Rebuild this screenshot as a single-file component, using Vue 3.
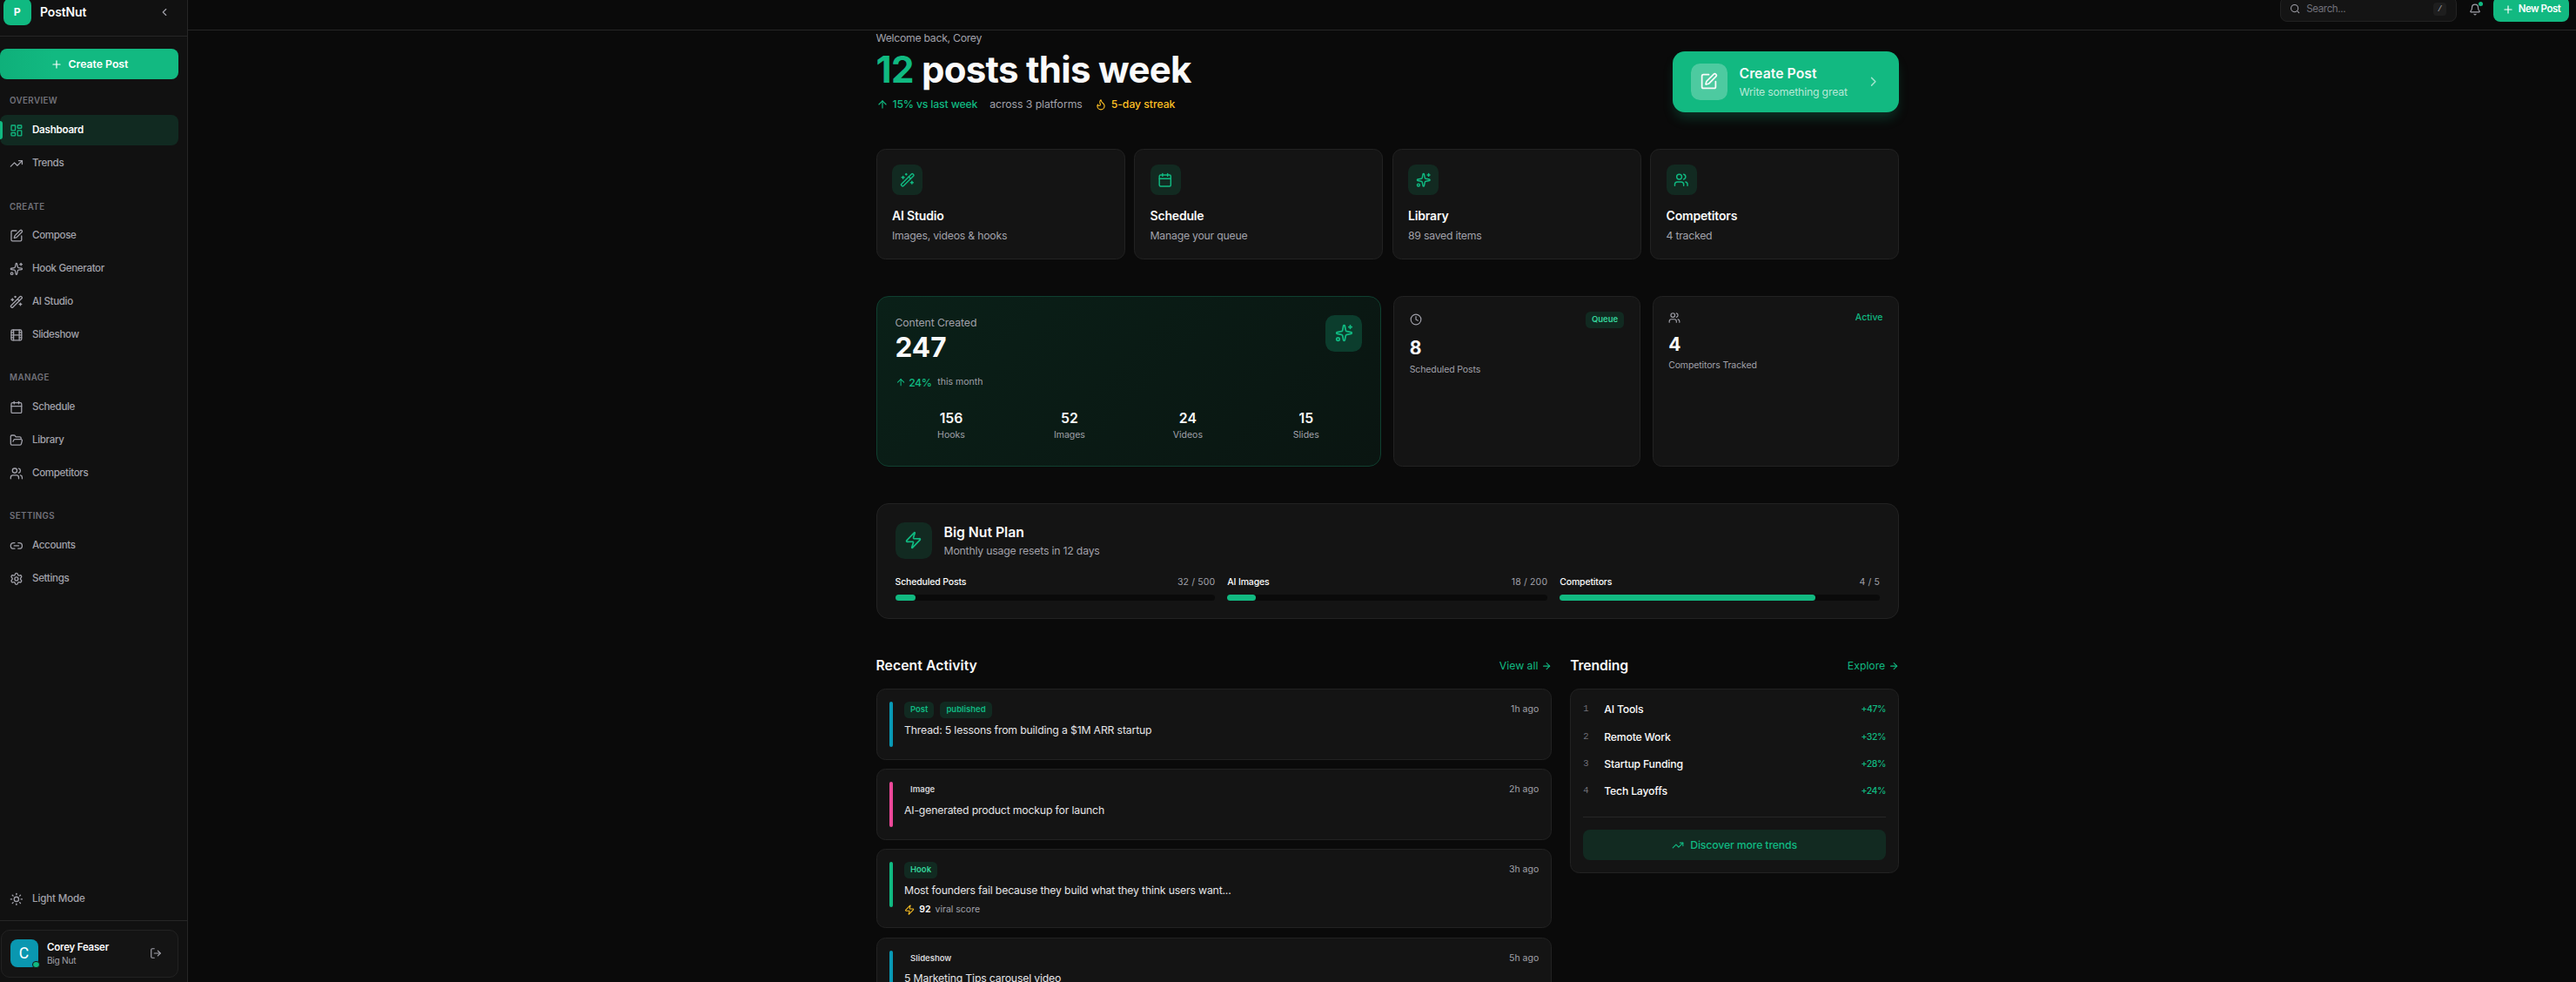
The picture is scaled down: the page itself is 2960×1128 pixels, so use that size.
<template>
    <div class="app">
        <aside class="sidebar">
            <div class="brand">
                <div class="logo">P</div>
                <span class="brand-name">PostNut</span>
                <svg class="icon s-14 collapse" viewBox="0 0 24 24" v-html="icons.chevronLeft"></svg>
            </div>
            <button class="create">
                <svg class="icon s-14" viewBox="0 0 24 24" v-html="icons.plus"></svg>
                <span>Create Post</span>
            </button>
            <nav class="nav">
                <div v-for="section in sections" :key="section.title" class="section">
                    <div class="section-title">{{ section.title }}</div>
                    <a v-for="item in section.items" :key="item.label" class="nav-item" :class="{active: item.label === current}">
                        <svg class="icon s-16" viewBox="0 0 24 24" v-html="icons[item.icon]"></svg>
                        <span>{{ item.label }}</span>
                    </a>
                </div>
            </nav>
            <a class="nav-item theme">
                <svg class="icon s-16" viewBox="0 0 24 24" v-html="icons.sun"></svg>
                <span>Light Mode</span>
            </a>
            <div class="user-wrap">
                <div class="user">
                    <div class="avatar">C<i class="online"></i></div>
                    <div class="user-text">
                        <span class="user-name">Corey Feaser</span>
                        <span class="user-plan">Big Nut</span>
                    </div>
                    <svg class="icon s-14" viewBox="0 0 24 24" v-html="icons.logout"></svg>
                </div>
            </div>
        </aside>

        <div class="page">
            <header class="topbar">
                <div class="search">
                    <svg class="icon s-12" viewBox="0 0 24 24" v-html="icons.search"></svg>
                    <span class="placeholder">Search...</span>
                    <kbd>/</kbd>
                </div>
                <div class="bell">
                    <svg class="icon s-14" viewBox="0 0 24 24" v-html="icons.bell"></svg>
                    <i class="bell-dot"></i>
                </div>
                <button class="new-post">
                    <svg class="icon s-14" viewBox="0 0 24 24" v-html="icons.plus"></svg>
                    <span>New Post</span>
                </button>
            </header>

            <main class="content">
                <section class="hero">
                    <div>
                        <div class="welcome">Welcome back, Corey</div>
                        <h1><span class="count">12</span> posts this week</h1>
                        <div class="hero-meta">
                            <span class="meta up">
                                <svg class="icon s-14" viewBox="0 0 24 24" v-html="icons.arrowUp"></svg>
                                <span>15% vs last week</span>
                            </span>
                            <span class="platforms">across 3 platforms</span>
                            <span class="meta streak">
                                <svg class="icon s-14" viewBox="0 0 24 24" v-html="icons.flame"></svg>
                                <span>5-day streak</span>
                            </span>
                        </div>
                    </div>
                    <div class="cta">
                        <div class="cta-icon">
                            <svg class="icon s-21" viewBox="0 0 24 24" v-html="icons.pen"></svg>
                        </div>
                        <div class="cta-text">
                            <span class="cta-title">Create Post</span>
                            <span class="cta-sub">Write something great</span>
                        </div>
                        <svg class="icon s-17 cta-arrow" viewBox="0 0 24 24" v-html="icons.chevronRight"></svg>
                    </div>
                </section>

                <section class="actions">
                    <div v-for="action in actions" :key="action.title" class="card action">
                        <div class="tile">
                            <svg class="icon s-17" viewBox="0 0 24 24" v-html="icons[action.icon]"></svg>
                        </div>
                        <div class="action-title">{{ action.title }}</div>
                        <div class="action-sub">{{ action.sub }}</div>
                    </div>
                </section>

                <section class="stats">
                    <div class="card created">
                        <div class="created-head">
                            <div>
                                <div class="created-label">Content Created</div>
                                <div class="created-value">247</div>
                            </div>
                            <div class="tile large strong">
                                <svg class="icon s-21" viewBox="0 0 24 24" v-html="icons.sparkles"></svg>
                            </div>
                        </div>
                        <div class="created-delta">
                            <svg class="icon s-12" viewBox="0 0 24 24" v-html="icons.arrowUp"></svg>
                            <span class="delta">24%</span>
                            <span class="period">this month</span>
                        </div>
                        <div class="breakdown">
                            <div v-for="item in breakdown" :key="item.label" class="part">
                                <span class="part-value">{{ item.value }}</span>
                                <span class="part-label">{{ item.label }}</span>
                            </div>
                        </div>
                    </div>
                    <div class="card mini">
                        <div class="mini-head">
                            <svg class="icon s-14" viewBox="0 0 24 24" v-html="icons.clock"></svg>
                            <span class="badge mint">Queue</span>
                        </div>
                        <div class="mini-value">8</div>
                        <div class="mini-label">Scheduled Posts</div>
                    </div>
                    <div class="card mini">
                        <div class="mini-head">
                            <svg class="icon s-14" viewBox="0 0 24 24" v-html="icons.users"></svg>
                            <span class="live">Active</span>
                        </div>
                        <div class="mini-value">4</div>
                        <div class="mini-label">Competitors Tracked</div>
                    </div>
                </section>

                <section class="card plan">
                    <div class="plan-head">
                        <div class="tile large">
                            <svg class="icon s-21" viewBox="0 0 24 24" v-html="icons.zap"></svg>
                        </div>
                        <div>
                            <div class="plan-title">Big Nut Plan</div>
                            <div class="plan-sub">Monthly usage resets in 12 days</div>
                        </div>
                    </div>
                    <div class="usages">
                        <div v-for="usage in usages" :key="usage.label">
                            <div class="usage-row">
                                <span class="usage-label">{{ usage.label }}</span>
                                <span class="usage-count">{{ usage.used }} / {{ usage.total }}</span>
                            </div>
                            <div class="track">
                                <div class="fill" :style="{width: `${usage.used / usage.total * 100}%`}"></div>
                            </div>
                        </div>
                    </div>
                </section>

                <section class="bottom">
                    <div>
                        <div class="heading">
                            <h2>Recent Activity</h2>
                            <a class="more"><span>View all</span><svg class="icon s-12" viewBox="0 0 24 24" v-html="icons.arrowRight"></svg></a>
                        </div>
                        <div class="feed">
                            <div v-for="post in activity" :key="post.title" class="card entry">
                                <i class="stripe" :class="post.color"></i>
                                <div class="entry-body">
                                    <div class="badges">
                                        <span v-for="badge in post.badges" :key="badge.text" class="badge" :class="badge.tone">{{ badge.text }}</span>
                                        <span class="time">{{ post.time }}</span>
                                    </div>
                                    <div class="entry-title">{{ post.title }}</div>
                                    <div v-if="post.score" class="score">
                                        <svg class="icon s-12" viewBox="0 0 24 24" v-html="icons.zap"></svg>
                                        <b>{{ post.score }}</b>
                                        <span>viral score</span>
                                    </div>
                                </div>
                            </div>
                        </div>
                    </div>
                    <div>
                        <div class="heading">
                            <h2 class="tight">Trending</h2>
                            <a class="more"><span>Explore</span><svg class="icon s-12" viewBox="0 0 24 24" v-html="icons.arrowRight"></svg></a>
                        </div>
                        <div class="card trending">
                            <div v-for="(trend, index) in trends" :key="trend.name" class="trend">
                                <span class="rank">{{ index + 1 }}</span>
                                <span class="trend-name">{{ trend.name }}</span>
                                <span class="growth">+{{ trend.growth }}%</span>
                            </div>
                            <div class="discover-wrap">
                                <button class="discover">
                                    <svg class="icon s-14" viewBox="0 0 24 24" v-html="icons.trendingUp"></svg>
                                    <span>Discover more trends</span>
                                </button>
                            </div>
                        </div>
                    </div>
                </section>
            </main>
        </div>
    </div>
</template>

<script setup>
import {ref} from "vue"

const current = ref("Dashboard")

const icons = {
    chevronLeft: '<path d="m15 18-6-6 6-6"/>',
    chevronRight: '<path d="m9 18 6-6-6-6"/>',
    plus: '<path d="M5 12h14"/><path d="M12 5v14"/>',
    arrowUp: '<path d="m5 12 7-7 7 7"/><path d="M12 19V5"/>',
    arrowRight: '<path d="M5 12h14"/><path d="m12 5 7 7-7 7"/>',
    dashboard: '<rect width="7" height="9" x="3" y="3" rx="1"/><rect width="7" height="5" x="14" y="3" rx="1"/><rect width="7" height="9" x="14" y="12" rx="1"/><rect width="7" height="5" x="3" y="16" rx="1"/>',
    trendingUp: '<path d="M16 7h6v6"/><path d="m22 7-8.5 8.5-5-5L2 17"/>',
    pen: '<path d="M12 3H5a2 2 0 0 0-2 2v14a2 2 0 0 0 2 2h14a2 2 0 0 0 2-2v-7"/><path d="M18.375 2.625a1 1 0 0 1 3 3l-9.013 9.014a2 2 0 0 1-.853.505l-2.873.84a.5.5 0 0 1-.62-.62l.84-2.873a2 2 0 0 1 .506-.852z"/>',
    sparkles: '<path d="M11.017 2.814a1 1 0 0 1 1.966 0l1.051 5.558a2 2 0 0 0 1.594 1.594l5.558 1.051a1 1 0 0 1 0 1.966l-5.558 1.051a2 2 0 0 0-1.594 1.594l-1.051 5.558a1 1 0 0 1-1.966 0l-1.051-5.558a2 2 0 0 0-1.594-1.594l-5.558-1.051a1 1 0 0 1 0-1.966l5.558-1.051a2 2 0 0 0 1.594-1.594z"/><path d="M20 2v4"/><path d="M22 4h-4"/><circle cx="4" cy="20" r="2"/>',
    wand: '<path d="m21.64 3.64-1.28-1.28a1.21 1.21 0 0 0-1.72 0L2.36 18.64a1.21 1.21 0 0 0 0 1.72l1.28 1.28a1.2 1.2 0 0 0 1.72 0L21.64 5.36a1.2 1.2 0 0 0 0-1.72"/><path d="m14 7 3 3"/><path d="M5 6v4"/><path d="M19 14v4"/><path d="M10 2v2"/><path d="M7 8H3"/><path d="M21 16h-4"/><path d="M11 3H9"/>',
    film: '<rect width="18" height="18" x="3" y="3" rx="2"/><path d="M7 3v18"/><path d="M3 7.5h4"/><path d="M3 12h18"/><path d="M3 16.5h4"/><path d="M17 3v18"/><path d="M17 7.5h4"/><path d="M17 16.5h4"/>',
    calendar: '<path d="M8 2v4"/><path d="M16 2v4"/><rect width="18" height="18" x="3" y="4" rx="2"/><path d="M3 10h18"/>',
    folder: '<path d="m6 14 1.5-2.9A2 2 0 0 1 9.24 10H20a2 2 0 0 1 1.94 2.5l-1.54 6a2 2 0 0 1-1.95 1.5H4a2 2 0 0 1-2-2V5a2 2 0 0 1 2-2h3.9a2 2 0 0 1 1.69.9l.81 1.2a2 2 0 0 0 1.67.9H18a2 2 0 0 1 2 2v2"/>',
    users: '<path d="M16 21v-2a4 4 0 0 0-4-4H6a4 4 0 0 0-4 4v2"/><circle cx="9" cy="7" r="4"/><path d="M22 21v-2a4 4 0 0 0-3-3.87"/><path d="M16 3.128a4 4 0 0 1 0 7.744"/>',
    link: '<path d="M9 17H7A5 5 0 0 1 7 7h2"/><path d="M15 7h2a5 5 0 1 1 0 10h-2"/><path d="M8 12h8"/>',
    settings: '<path d="M9.671 4.136a2.34 2.34 0 0 1 4.659 0 2.34 2.34 0 0 0 3.319 1.915 2.34 2.34 0 0 1 2.33 4.033 2.34 2.34 0 0 0 0 3.831 2.34 2.34 0 0 1-2.33 4.033 2.34 2.34 0 0 0-3.319 1.915 2.34 2.34 0 0 1-4.659 0 2.34 2.34 0 0 0-3.32-1.915 2.34 2.34 0 0 1-2.33-4.033 2.34 2.34 0 0 0 0-3.831A2.34 2.34 0 0 1 6.35 6.051a2.34 2.34 0 0 0 3.319-1.915"/><circle cx="12" cy="12" r="3"/>',
    sun: '<circle cx="12" cy="12" r="4"/><path d="M12 2v2"/><path d="M12 20v2"/><path d="m4.93 4.93 1.41 1.41"/><path d="m17.66 17.66 1.41 1.41"/><path d="M2 12h2"/><path d="M20 12h2"/><path d="m6.34 17.66-1.41 1.41"/><path d="m19.07 4.93-1.41 1.41"/>',
    logout: '<path d="m16 17 5-5-5-5"/><path d="M21 12H9"/><path d="M9 21H5a2 2 0 0 1-2-2V5a2 2 0 0 1 2-2h4"/>',
    search: '<circle cx="11" cy="11" r="8"/><path d="m21 21-4.34-4.34"/>',
    bell: '<path d="M10.268 21a2 2 0 0 0 3.464 0"/><path d="M3.262 15.326A1 1 0 0 0 4 17h16a1 1 0 0 0 .74-1.673C19.41 13.956 18 12.499 18 8A6 6 0 0 0 6 8c0 4.499-1.411 5.956-2.738 7.326"/>',
    flame: '<path d="M8.5 14.5A2.5 2.5 0 0 0 11 12c0-1.38-.5-2-1-3-1.072-2.143-.224-4.054 2-6 .5 2.5 2 4.9 4 6.5 2 1.6 3 3.5 3 5.5a7 7 0 1 1-14 0c0-1.153.433-2.294 1-3a2.5 2.5 0 0 0 2.5 2.5z"/>',
    zap: '<path d="M4 14a1 1 0 0 1-.78-1.63l9.9-10.2a.5.5 0 0 1 .86.46l-1.92 6.02A1 1 0 0 0 13 10h7a1 1 0 0 1 .78 1.63l-9.9 10.2a.5.5 0 0 1-.86-.46l1.92-6.02A1 1 0 0 0 11 14z"/>',
    clock: '<circle cx="12" cy="12" r="10"/><path d="M12 6v6l4 2"/>'
}

const sections = [
    {title: "OVERVIEW", items: [
        {label: "Dashboard", icon: "dashboard"},
        {label: "Trends", icon: "trendingUp"}
    ]},
    {title: "CREATE", items: [
        {label: "Compose", icon: "pen"},
        {label: "Hook Generator", icon: "sparkles"},
        {label: "AI Studio", icon: "wand"},
        {label: "Slideshow", icon: "film"}
    ]},
    {title: "MANAGE", items: [
        {label: "Schedule", icon: "calendar"},
        {label: "Library", icon: "folder"},
        {label: "Competitors", icon: "users"}
    ]},
    {title: "SETTINGS", items: [
        {label: "Accounts", icon: "link"},
        {label: "Settings", icon: "settings"}
    ]}
]

const actions = [
    {title: "AI Studio", sub: "Images, videos & hooks", icon: "wand"},
    {title: "Schedule", sub: "Manage your queue", icon: "calendar"},
    {title: "Library", sub: "89 saved items", icon: "sparkles"},
    {title: "Competitors", sub: "4 tracked", icon: "users"}
]

const breakdown = [
    {value: 156, label: "Hooks"},
    {value: 52, label: "Images"},
    {value: 24, label: "Videos"},
    {value: 15, label: "Slides"}
]

const usages = [
    {label: "Scheduled Posts", used: 32, total: 500},
    {label: "AI Images", used: 18, total: 200},
    {label: "Competitors", used: 4, total: 5}
]

const activity = [
    {title: "Thread: 5 lessons from building a $1M ARR startup", time: "1h ago", color: "teal", badges: [{text: "Post", tone: "emerald"}, {text: "published", tone: "emerald"}]},
    {title: "AI-generated product mockup for launch", time: "2h ago", color: "pink", badges: [{text: "Image", tone: "plain"}]},
    {title: "Most founders fail because they build what they think users want...", time: "3h ago", color: "green", score: 92, badges: [{text: "Hook", tone: "mint"}]},
    {title: "5 Marketing Tips carousel video", time: "5h ago", color: "teal", badges: [{text: "Slideshow", tone: "plain"}]}
]

const trends = [
    {name: "AI Tools", growth: 47},
    {name: "Remote Work", growth: 32},
    {name: "Startup Funding", growth: 28},
    {name: "Tech Layoffs", growth: 24}
]
</script>

<style>
body {
    background: #0a0a0a;
}
</style>

<style scoped>
.app {
    display: flex;
    height: 1128px;
    overflow: hidden;
    background: #0a0a0a;
    color: #fafafa;
    font-family: "Inter", sans-serif;
    font-size: 12.25px;
    line-height: 17.5px;
}
.app * {
    box-sizing: border-box;
}
button {
    border: 0;
    padding: 0;
    font: inherit;
    color: #fff;
}
h1, h2 {
    margin: 0;
}
.icon {
    flex: none;
    display: block;
    fill: none;
    stroke: currentColor;
    stroke-width: 2;
    stroke-linecap: round;
    stroke-linejoin: round;
}
.s-12 { width: 12.25px; height: 12.25px; }
.s-14 { width: 14px; height: 14px; }
.s-16 { width: 15.75px; height: 15.75px; }
.s-17 { width: 17.5px; height: 17.5px; }
.s-21 { width: 21px; height: 21px; }

/* sidebar */
.sidebar {
    flex: none;
    width: 216px;
    display: flex;
    flex-direction: column;
    background: #111;
    border-right: 1px solid #262626;
}
.brand {
    flex: none;
    height: 56px;
    margin-top: -14px;
    padding: 0 19px 0 4px;
    display: flex;
    align-items: center;
    border-bottom: 1px solid #262626;
}
.logo {
    width: 31.5px;
    height: 31.5px;
    border-radius: 8px;
    display: flex;
    align-items: center;
    justify-content: center;
    background: #10b981;
    font-weight: 700;
}
.brand-name {
    margin-left: 10.5px;
    font-size: 14px;
    font-weight: 600;
    letter-spacing: -0.15px;
}
.collapse {
    margin-left: auto;
    color: #a1a1aa;
}
.create {
    flex: none;
    width: 205px;
    height: 35px;
    margin-top: 14px;
    display: flex;
    align-items: center;
    justify-content: center;
    gap: 7px;
    border-radius: 8px;
    background: linear-gradient(90deg, #0fb07a, #12b981 30%);
    font-weight: 600;
}
.nav {
    flex: 1;
    padding-top: 16.4px;
}
.section {
    width: 205px;
    display: flex;
    flex-direction: column;
    gap: 3px;
    margin-bottom: 23.4px;
}
.section-title {
    height: 22.1px;
    padding: 0 11px;
    font-size: 9.75px;
    font-weight: 600;
    letter-spacing: 0.4px;
    color: #71717a;
}
.nav-item {
    position: relative;
    height: 34.85px;
    padding-left: 10.75px;
    display: flex;
    align-items: center;
    gap: 10.5px;
    border-radius: 8px;
    font-size: 11.6px;
    font-weight: 500;
    letter-spacing: -0.35px;
    color: #a1a1aa;
}
.nav-item.active {
    background: #112a21;
    color: #fafafa;
    font-weight: 600;
    letter-spacing: -0.25px;
}
.nav-item.active .icon {
    color: #10b981;
}
.nav-item.active::before {
    content: "";
    position: absolute;
    left: 0;
    top: 7px;
    width: 3px;
    height: 21px;
    border-radius: 0 3px 3px 0;
    background: #10b981;
}
.nav-item.theme {
    flex: none;
    margin-bottom: 6.5px;
    letter-spacing: -0.15px;
}
.user-wrap {
    flex: none;
    height: 71.5px;
    padding: 10.5px 10.5px 0 1px;
    border-top: 1px solid #262626;
}
.user {
    height: 54.5px;
    padding: 0 18px 0 9.5px;
    display: flex;
    align-items: center;
    border: 1px solid #222;
    border-radius: 10px;
    background: #141414;
    color: #a1a1aa;
}
.avatar {
    position: relative;
    width: 32px;
    height: 32px;
    border-radius: 8px;
    display: flex;
    align-items: center;
    justify-content: center;
    background: #0a97b0;
    color: #fff;
    font-family: "Roboto", sans-serif;
    font-size: 17.5px;
}
.online {
    position: absolute;
    right: -2px;
    bottom: -1px;
    width: 8.5px;
    height: 8.5px;
    border-radius: 50%;
    border: 1.5px solid #141414;
    background: #10b981;
}
.user-text {
    flex: 1;
    margin-left: 10.5px;
    display: flex;
    flex-direction: column;
}
.user-name {
    font-size: 11.5px;
    line-height: 16px;
    font-weight: 600;
    letter-spacing: -0.22px;
    color: #fafafa;
}
.user-plan {
    font-size: 10.2px;
    line-height: 14px;
    letter-spacing: -0.3px;
}

/* top bar */
.page {
    flex: 1;
    min-width: 0;
}
.topbar {
    height: 48px;
    margin-top: -13px;
    padding-right: 8px;
    display: flex;
    align-items: center;
    justify-content: flex-end;
    border-bottom: 1px solid #262626;
}
.search {
    width: 203.5px;
    height: 29px;
    padding: 0 11px 0 10.5px;
    display: flex;
    align-items: center;
    gap: 7px;
    border: 1px solid #222;
    border-radius: 8px;
    background: #141414;
    color: #a1a1aa;
}
.placeholder {
    flex: 1;
    font-size: 11.6px;
    letter-spacing: -0.4px;
    color: #71717a;
}
kbd {
    width: 15px;
    height: 15px;
    border-radius: 4px;
    background: #1e1e1e;
    text-align: center;
    font: 9.5px/15px "Liberation Mono", monospace;
}
.bell {
    position: relative;
    margin: 0 14px;
    color: #a1a1aa;
}
.bell-dot {
    position: absolute;
    right: -2px;
    top: -1.5px;
    width: 5px;
    height: 5px;
    border-radius: 50%;
    background: #10b981;
}
.new-post {
    width: 87px;
    height: 29px;
    display: flex;
    align-items: center;
    justify-content: center;
    gap: 5px;
    border-radius: 8px;
    background: #12b981;
    font-size: 11.4px;
    font-weight: 600;
    letter-spacing: -0.45px;
}

/* content */
.content {
    width: 1175.5px;
    margin-left: 790.5px;
}
.card {
    border: 1px solid #222;
    border-radius: 10.5px;
    background: #141414;
}
.hero {
    display: flex;
    justify-content: space-between;
    align-items: flex-end;
    height: 93.5px;
}
.welcome, .platforms {
    color: #a1a1aa;
}
.welcome {
    letter-spacing: -0.28px;
}
.platforms {
    letter-spacing: -0.06px;
}
h1 {
    margin: 6px 0 10.5px;
    font-size: 42px;
    line-height: 42px;
    font-weight: 700;
    letter-spacing: -0.7px;
}
.count {
    color: #10b981;
}
.hero-meta {
    display: flex;
    align-items: center;
    gap: 14px;
}
.meta {
    display: flex;
    align-items: center;
    gap: 5px;
    font-weight: 500;
}
.up {
    letter-spacing: -0.16px;
    color: #10b981;
}
.streak {
    letter-spacing: -0.05px;
    color: #fbbf24;
}
.cta {
    width: 260.5px;
    height: 70px;
    padding: 0 21px;
    display: flex;
    align-items: center;
    border-radius: 14px;
    background: #12b981;
    box-shadow: 0 9px 14px -3px rgba(16, 185, 129, 0.25);
}
.cta-icon {
    width: 42px;
    height: 42px;
    border-radius: 10.5px;
    display: flex;
    align-items: center;
    justify-content: center;
    background: rgba(255, 255, 255, 0.25);
}
.cta-text {
    flex: 1;
    margin-left: 14px;
    display: flex;
    flex-direction: column;
}
.cta-title {
    font-size: 15.75px;
    line-height: 24.5px;
    font-weight: 600;
    letter-spacing: 0.05px;
}
.cta-sub {
    letter-spacing: -0.18px;
    color: rgba(255, 255, 255, 0.7);
}
.cta-arrow {
    color: rgba(255, 255, 255, 0.6);
}
.actions {
    display: grid;
    grid-template-columns: repeat(4, 1fr);
    gap: 10.5px;
    margin-top: 42px;
}
.action {
    height: 127px;
    padding: 17.5px;
}
.tile {
    flex: none;
    width: 35px;
    height: 35px;
    border-radius: 8.75px;
    display: flex;
    align-items: center;
    justify-content: center;
    background: #122a21;
    color: #10b981;
}
.tile.large {
    width: 42px;
    height: 42px;
    border-radius: 10.5px;
}
.tile.strong {
    background: #0c3d2d;
}
.action-title {
    margin: 13px 0 3.5px;
    font-size: 14px;
    line-height: 21px;
    font-weight: 600;
    letter-spacing: -0.18px;
}
.action-sub {
    letter-spacing: -0.23px;
    color: #a1a1aa;
}

/* stats */
.stats {
    display: grid;
    grid-template-columns: repeat(4, 1fr);
    gap: 14px;
    height: 196px;
    margin-top: 42px;
}
.created {
    grid-column: span 2;
    padding: 21px;
    border-color: #0f4030;
    border-radius: 14px;
    background: linear-gradient(135deg, #0a2018, #0a1511);
}
.created-head {
    display: flex;
    justify-content: space-between;
}
.created-label, .period, .part-label, .mini-label {
    color: #a1a1aa;
}
.created-label {
    letter-spacing: -0.1px;
}
.created-value {
    margin-top: 2px;
    font-size: 31.5px;
    line-height: 35px;
    font-weight: 700;
}
.created-delta {
    display: flex;
    align-items: center;
    margin-top: 14.5px;
    color: #10b981;
}
.delta {
    margin: 0 7px 0 3.5px;
    font-weight: 500;
    letter-spacing: -0.5px;
}
.period, .part-label {
    font-size: 10.5px;
    line-height: 14px;
}
.breakdown {
    display: grid;
    grid-template-columns: repeat(4, 1fr);
    gap: 7px;
    margin-top: 20.5px;
}
.part {
    display: flex;
    flex-direction: column;
    align-items: center;
}
.part-value {
    font-size: 15.75px;
    line-height: 24.5px;
    font-weight: 600;
}
.mini {
    padding: 17.5px;
}
.mini-head {
    display: flex;
    justify-content: space-between;
    align-items: center;
    color: #a1a1aa;
}
.live {
    font-size: 10.5px;
    line-height: 14px;
    font-weight: 500;
    color: #10b981;
}
.badge {
    height: 18.5px;
    padding: 0 7px;
    border-radius: 5.5px;
    font-size: 9.5px;
    line-height: 18.5px;
    font-weight: 600;
}
.emerald {
    background: #112a21;
    color: #10b981;
}
.mint {
    background: #112a21;
    color: #34d399;
}
.plain {
    color: #d4d4d8;
}
.mini-value {
    margin-top: 11.5px;
    font-size: 21px;
    line-height: 24.5px;
    font-weight: 700;
}
.mini-label {
    margin-top: 5px;
    font-size: 10.5px;
    line-height: 14px;
    letter-spacing: -0.12px;
}

/* plan */
.plan {
    height: 133px;
    margin-top: 42px;
    padding: 21px;
    border-radius: 14px;
}
.plan-head {
    display: flex;
    gap: 14px;
}
.plan-title {
    font-size: 15.75px;
    line-height: 24.5px;
    font-weight: 600;
}
.plan-sub {
    letter-spacing: -0.19px;
    color: #a1a1aa;
}
.usages {
    display: grid;
    grid-template-columns: repeat(3, 1fr);
    gap: 14px;
    margin-top: 20px;
}
.usage-row {
    display: flex;
    justify-content: space-between;
    margin-bottom: 7px;
    font-size: 10.5px;
    line-height: 14px;
}
.usage-label {
    font-weight: 500;
    letter-spacing: -0.15px;
}
.usage-count {
    letter-spacing: 0.15px;
    color: #a1a1aa;
}
.track {
    height: 7px;
    border-radius: 4px;
    background: #0a0a0a;
}
.fill {
    height: 100%;
    border-radius: 4px;
    background: #12b981;
}

/* activity and trends */
.bottom {
    display: grid;
    grid-template-columns: 776.7px 1fr;
    gap: 21px;
    margin-top: 42px;
}
.heading {
    display: flex;
    justify-content: space-between;
    align-items: center;
    margin-bottom: 14px;
}
h2 {
    font-size: 15.75px;
    line-height: 24.5px;
    font-weight: 600;
    letter-spacing: 0.05px;
}
h2.tight {
    letter-spacing: -0.12px;
}
.more {
    display: flex;
    align-items: center;
    gap: 3.5px;
    color: #10b981;
}
.feed {
    display: flex;
    flex-direction: column;
    gap: 10.5px;
}
.entry {
    display: flex;
    gap: 13.5px;
    padding: 14px 14px 13.5px;
}
.stripe {
    width: 4px;
    height: 52px;
    border-radius: 2px;
}
.teal { background: #0899b5; }
.pink { background: #ec4899; }
.green { background: #10b981; }
.entry-body {
    flex: 1;
}
.badges {
    display: flex;
    gap: 7px;
    height: 18.5px;
}
.time {
    margin-left: auto;
    font-size: 10.5px;
    color: #a1a1aa;
}
.entry-title {
    margin-top: 5px;
    letter-spacing: -0.17px;
    color: #e4e4e7;
}
.score {
    display: flex;
    align-items: center;
    gap: 5px;
    height: 14px;
    margin-top: 7px;
    margin-bottom: -0.5px;
    font-size: 10.5px;
    color: #a1a1aa;
}
.score .icon {
    color: #fbbf24;
}
.score b {
    font-weight: 600;
    color: #fafafa;
}
.trending {
    height: 212px;
    padding: 7.5px 14px 14px;
}
.trend {
    display: flex;
    align-items: center;
    height: 31.3px;
}
.rank {
    width: 24px;
    font-family: "Liberation Mono", monospace;
    font-size: 10.5px;
    color: #71717a;
}
.trend-name {
    flex: 1;
    font-weight: 500;
    letter-spacing: -0.2px;
}
.growth {
    font-size: 10.5px;
    font-weight: 500;
    letter-spacing: -0.45px;
    color: #10b981;
}
.discover-wrap {
    margin-top: 13.5px;
    padding-top: 14px;
    border-top: 1px solid #262626;
}
.discover {
    width: 100%;
    height: 35px;
    display: flex;
    align-items: center;
    justify-content: center;
    gap: 7px;
    border-radius: 8px;
    background: #122a21;
    color: #10b981;
    font-weight: 500;
    letter-spacing: -0.13px;
}
</style>
